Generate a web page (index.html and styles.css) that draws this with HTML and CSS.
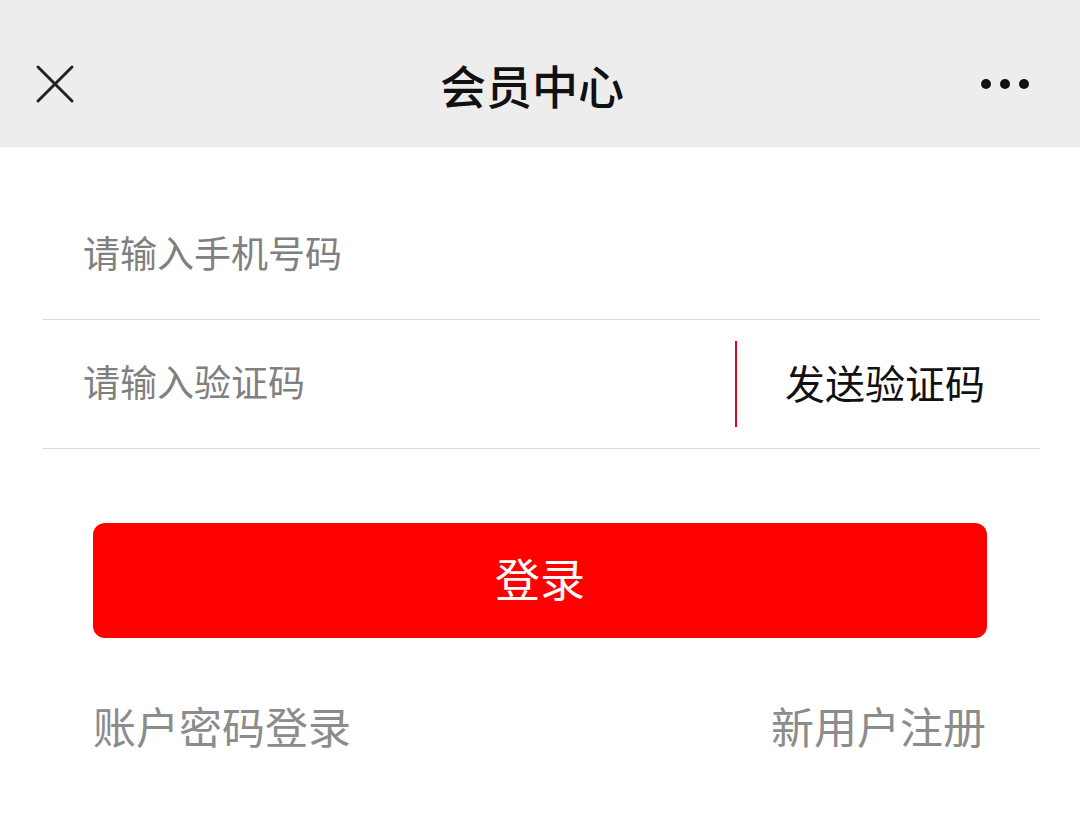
FILE: index.html
```
<!DOCTYPE HTML>
<html lang="zh-CN">
<head>
	<meta charset="UTF-8">
	<title>会员中心</title>
	<link rel="stylesheet" href="styles.css">
</head>
<body>
	<div class="hd">
		<div class="hd_close">
			<svg width="40" height="40" viewBox="0 0 40 40">
				<path d="M3 3 L37 37 M37 3 L3 37" stroke="#222" stroke-width="3" stroke-linecap="round" fill="none"/>
			</svg>
		</div>
		<div class="hd_title">会员中心</div>
		<div class="hd_more"><i></i><i></i><i></i></div>
	</div>
	<!-- hd end -->

	<div class="login_form">
		<div class="form_row">
			<input class="form_input" type="text" placeholder="请输入手机号码" />
		</div>
		<div class="form_row">
			<input class="form_input" type="text" placeholder="请输入验证码" />
			<div class="send_code">发送验证码</div>
		</div>
	</div>
	<!-- login_form end -->

	<div class="login_btn">登录</div>

	<div class="login_links">
		<a href="#">账户密码登录</a>
		<a href="#">新用户注册</a>
	</div>
</body>
</html>
```

FILE: styles.css
```
body {
		margin:0;
		background:#fff;
		font-family:"Noto Sans CJK SC", "Noto Sans", sans-serif;
		color:#111;
	}
.hd {
		display:grid;
		grid-template-columns:1fr auto 1fr;
		align-items:center;
		box-sizing:border-box;
		height:147px;
		padding:20px 51px 0 35px;
		background:#ededed;
	}
.hd_close {
		display:flex;
	}
.hd_title {
		font-size:46px;
		font-weight:500;
		color:#111;
		line-height:1;
	}
.hd_more {
		display:flex;
		justify-content:flex-end;
		gap:9px;
	}
.hd_more i {
		width:10px;
		height:10px;
		border-radius:50%;
		background:#111;
	}
.login_form {
		margin:44px 40px 0 43px;
	}
.form_row {
		display:flex;
		align-items:center;
		height:128px;
		border-bottom:1px solid #dcdcdc;
	}
.form_input {
		flex:1;
		min-width:0;
		box-sizing:border-box;
		height:100%;
		padding:0 0 6px 40px;
		border:0;
		outline:none;
		background:transparent;
		font:37px "Noto Sans CJK SC", sans-serif;
		color:#333;
	}
.form_input::placeholder {
		color:#808080;
	}
.send_code {
		display:flex;
		align-items:center;
		box-sizing:border-box;
		height:86px;
		padding:0 55px 5px 48px;
		border-left:2px solid #e0001b;
		font-size:40px;
		color:#111;
	}
.login_btn {
		display:flex;
		align-items:center;
		justify-content:center;
		box-sizing:border-box;
		height:115px;
		margin:74px 93px 0;
		padding-bottom:7px;
		border-radius:12px;
		background:#fe0000;
		color:#fff;
		font-size:45px;
	}
.login_links {
		display:flex;
		justify-content:space-between;
		margin:57px 94px 0 93px;
		line-height:60px;
	}
.login_links a {
		font-size:43px;
		color:#8c8c8c;
		text-decoration:none;
	}
```
